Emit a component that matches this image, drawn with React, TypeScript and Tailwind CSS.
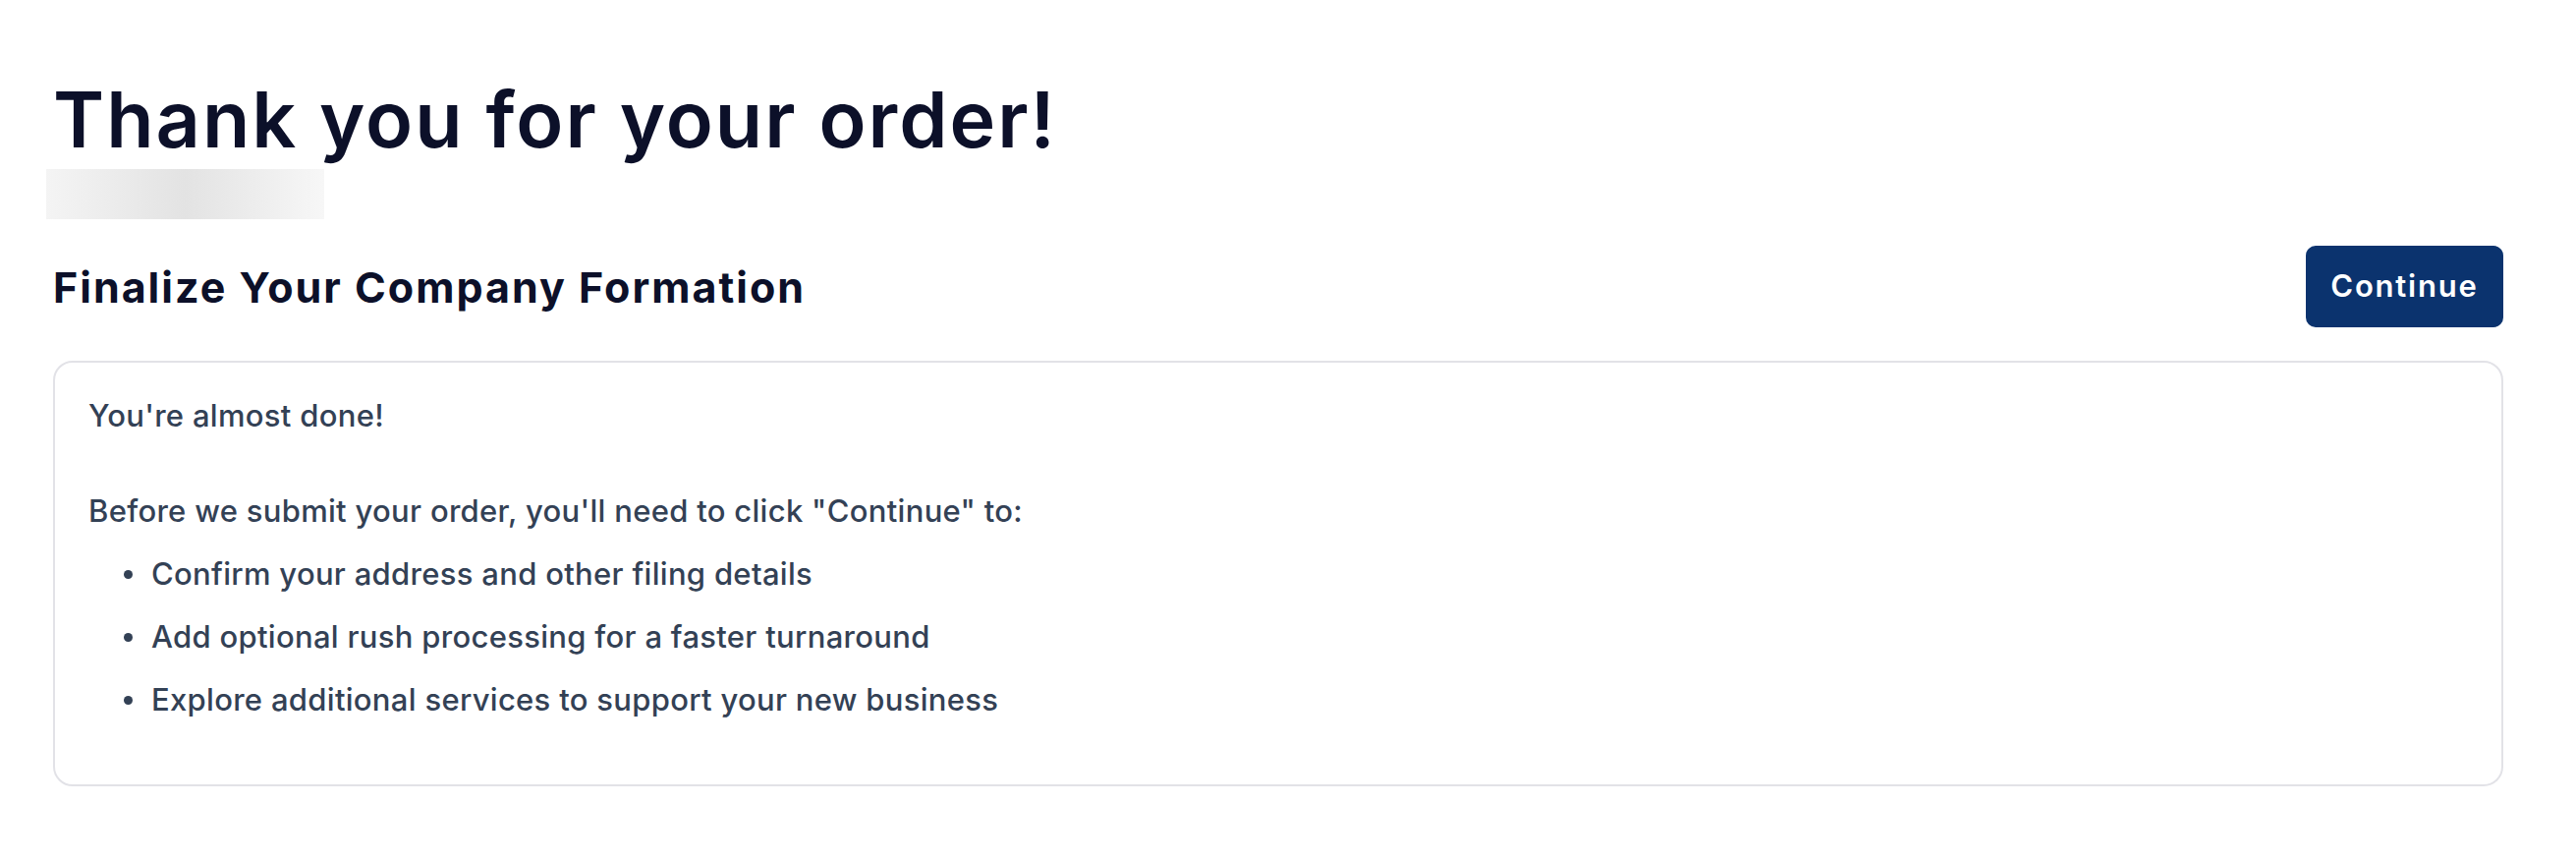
const ITEMS = [
  'Confirm your address and other filing details',
  'Add optional rush processing for a faster turnaround',
  'Explore additional services to support your new business',
]

export default function App() {
  return (
    <div className="min-h-screen bg-white pl-[54px] pr-[74px] pt-[82px] font-['Inter',sans-serif]">
      <h1 className="text-[79px] leading-[78px] font-semibold tracking-[2px] text-[#0c1029]">
        Thank you for your order!
      </h1>

      {/* redacted order number */}
      <div className="mt-[12px] ml-[-7px] h-[51px] w-[283px] bg-gradient-to-r from-[#f4f4f4] via-[#e3e3e3] to-[#f7f7f7]" />

      <div className="mt-[27px] flex items-center justify-between">
        <h2 className="text-[43px] leading-[52px] font-bold tracking-[2px] text-[#0c1029]">
          Finalize Your Company Formation
        </h2>
        <button className="h-[83px] w-[201px] rounded-[10px] bg-[#0b336e] text-[31px] font-semibold tracking-[1.8px] text-white">
          Continue
        </button>
      </div>

      <div className="mt-[34px] rounded-[20px] border-2 border-[#e2e2e7] pl-[34px] pr-[34px] pt-[33px] pb-[65px] text-[31px] leading-[42px] font-medium tracking-[0.3px] text-[#334155]">
        <p>You're almost done!</p>
        <p className="mt-[55px]">Before we submit your order, you'll need to click "Continue" to:</p>
        <ul className="ml-[36px]">
          {ITEMS.map(item => (
            <li key={item} className="mt-[22px] flex items-center gap-[19px]">
              <span className="h-[9px] w-[9px] rounded-full bg-[#334155]" />
              <span>{item}</span>
            </li>
          ))}
        </ul>
      </div>
    </div>
  )
}
